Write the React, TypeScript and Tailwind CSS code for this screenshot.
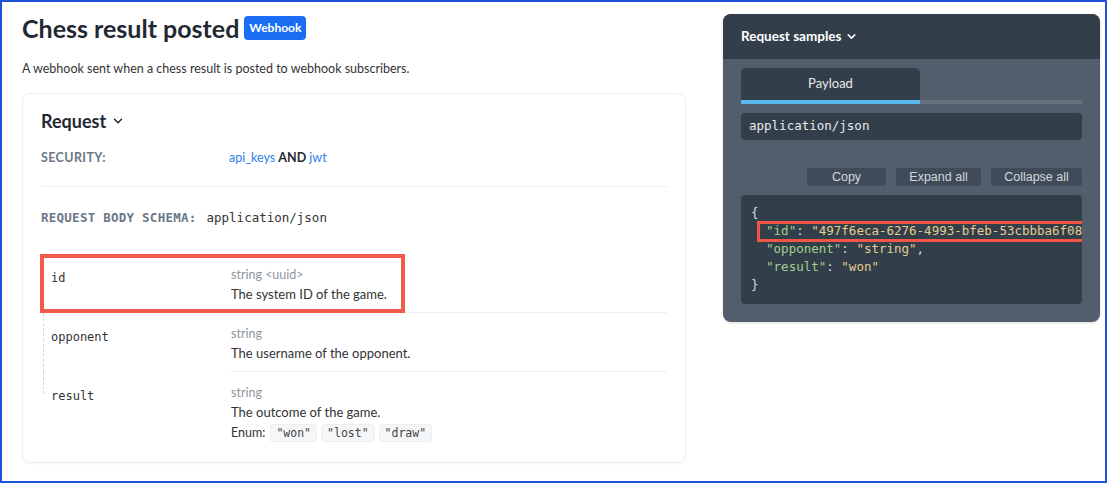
import { ChevronDown } from "lucide-react";

const mono = "font-['DejaVu_Sans_Mono','Liberation_Mono',monospace]";

type Prop = {
  name: string;
  type: string;
  format?: string;
  description: string;
  enumValues?: string[];
  last?: boolean;
};

const props: Prop[] = [
  { name: "id", type: "string", format: "<uuid>", description: "The system ID of the game." },
  { name: "opponent", type: "string", description: "The username of the opponent." },
  {
    name: "result",
    type: "string",
    description: "The outcome of the game.",
    enumValues: ['"won"', '"lost"', '"draw"'],
    last: true,
  },
];

function PropertyRow({ prop }: { prop: Prop }) {
  return (
    <div className="flex">
      <div className="w-[190px] shrink-0 pl-[2px]">
        <div
          className={`border-l border-dashed border-[#d4d8dc] pl-[7px] pt-[10px] ${
            prop.last ? "h-[22px]" : "h-full"
          }`}
        >
          <span className={`${mono} text-[12px] leading-[20px] text-[#333]`}>{prop.name}</span>
        </div>
      </div>
      <div
        className={`flex-1 pt-[11px] ${
          prop.last ? "pb-[19px]" : "pb-[9px] border-b border-[#eceef0]"
        }`}
      >
        <div className="text-[12.5px] leading-[20px] text-[#8d96a0]">
          {prop.type}
          {prop.format && <span> {prop.format}</span>}
        </div>
        <div className="text-[13px] leading-[18px] text-[#333]">{prop.description}</div>
        {prop.enumValues && (
          <div className="mt-[2px] flex items-center gap-[4px] text-[12.5px] leading-[20px] text-[#333]">
            <span className="mr-[1px]">Enum:</span>
            {prop.enumValues.map((v) => (
              <span
                key={v}
                className={`${mono} rounded-[3px] border border-[#eceef0] bg-[#f5f6f7] px-[5px] text-[11.5px] leading-[16px] text-[#444]`}
              >
                {v}
              </span>
            ))}
          </div>
        )}
      </div>
    </div>
  );
}

function RequestCard() {
  return (
    <div className="mt-[14px] rounded-[8px] border border-[#eceef1] bg-white px-[18px] pt-[15px] shadow-[0_1px_2px_rgba(0,0,0,0.03)]">
      <div className="flex items-center gap-[5px]">
        <h2 className="text-[18px] font-bold leading-[24px] text-[#1f2933]">Request</h2>
        <ChevronDown className="h-[14px] w-[14px] text-[#1f2933]" strokeWidth={2.5} />
      </div>

      <div className="mt-[15px] flex border-b border-[#eceef0] pb-[18px] text-[12.5px] leading-[20px]">
        <div className="w-[188px] shrink-0 font-bold uppercase tracking-[0.03em] text-[#6b7785]">
          Security:
        </div>
        <div className="text-[#2f7fe8]">
          api_keys <span className="font-bold text-[#1f2933]">AND</span> jwt
        </div>
      </div>

      <div className={`${mono} mt-[21px] text-[12.5px] leading-[20px]`}>
        <span className="font-bold uppercase tracking-[0.02em] text-[#6b7785]">Request Body Schema:</span>
        <span className="ml-[10px] text-[#333]">application/json</span>
      </div>

      <div className="relative mt-[26px]">
        <div className="pointer-events-none absolute left-[-1px] top-0 h-[59px] w-[365px] border-[4px] border-[#f25a4a]" />
        {props.map((p) => (
          <PropertyRow key={p.name} prop={p} />
        ))}
      </div>
    </div>
  );
}

function RequestSamples() {
  return (
    <div className="mt-[12px] w-[377px] overflow-hidden rounded-[8px] bg-[#525e6b] shadow-[0_1px_3px_rgba(0,0,0,0.15)]">
      <div className="flex h-[45px] items-center gap-[4px] bg-[#323f4b] pl-[18px]">
        <span className="text-[13.5px] font-bold text-white">Request samples</span>
        <ChevronDown className="h-[13px] w-[13px] text-white" strokeWidth={2.75} />
      </div>

      <div className="px-[18px] pb-[18px] pt-[9px]">
        <div className="flex">
          <div className="w-[179px]">
            <div className="flex h-[32px] items-center justify-center rounded-t-[5px] bg-[#323f4b] text-[13px] text-[#e6e9ec]">
              Payload
            </div>
            <div className="h-[4px] bg-[#5ab6ee]" />
          </div>
          <div className="flex flex-1 flex-col justify-end">
            <div className="h-[4px] bg-[#66717d]" />
          </div>
        </div>

        <div
          className={`${mono} mt-[9px] flex h-[27px] items-center rounded-[4px] bg-[#323f4b] pl-[8px] text-[12.5px] text-[#e8eaed]`}
        >
          application/json
        </div>

        <div className="mt-[28px] flex justify-end gap-[10px] font-['Liberation_Sans',Arial,sans-serif] text-[12.5px] text-[#d3d7db]">
          <button className="h-[18px] w-[79px] rounded-[3px] bg-[#3f4b58]">Copy</button>
          <button className="h-[18px] w-[85px] rounded-[3px] bg-[#3f4b58]">Expand all</button>
          <button className="h-[18px] w-[91px] rounded-[3px] bg-[#3f4b58]">Collapse all</button>
        </div>

        <div
          className={`${mono} relative mt-[9px] h-[109px] overflow-hidden rounded-[4px] bg-[#323f4b] pl-[10px] pt-[9px] text-[12.5px] leading-[18px] text-[#d6dade] whitespace-pre`}
        >
          <div>{"{"}</div>
          <div>
            {"  "}
            <span className="text-[#a3cf8b]">"id"</span>:{" "}
            <span className="text-[#e2cc8c]">"497f6eca-6276-4993-bfeb-53cbbba6f08"</span>,
          </div>
          <div>
            {"  "}
            <span className="text-[#a3cf8b]">"opponent"</span>:{" "}
            <span className="text-[#e2cc8c]">"string"</span>,
          </div>
          <div>
            {"  "}
            <span className="text-[#a3cf8b]">"result"</span>:{" "}
            <span className="text-[#e2cc8c]">"won"</span>
          </div>
          <div>{"}"}</div>
          <div className="pointer-events-none absolute left-[16px] top-[26px] h-[21px] w-[340px] border-[3px] border-[#f25445]" />
        </div>
      </div>
    </div>
  );
}

export default function App() {
  return (
    <div className="flex h-[483px] w-[1107px] overflow-hidden border-2 border-[#1f52d8] bg-white font-['Lato',sans-serif]">
      <div className="w-[684px] shrink-0 pl-[20px] pt-[10px]">
        <div className="flex items-center gap-[5px]">
          <h1 className="text-[25px] font-bold leading-[32px] text-[#1f2933]">Chess result posted</h1>
          <span className="rounded-[4px] bg-[#1b6ef3] px-[5px] text-[12px] font-bold leading-[24px] text-white">
            Webhook
          </span>
        </div>
        <p className="mt-[15px] text-[12.5px] leading-[20px] text-[#333]">
          A webhook sent when a chess result is posted to webhook subscribers.
        </p>
        <RequestCard />
      </div>
      <div className="ml-[37px]">
        <RequestSamples />
      </div>
    </div>
  );
}
